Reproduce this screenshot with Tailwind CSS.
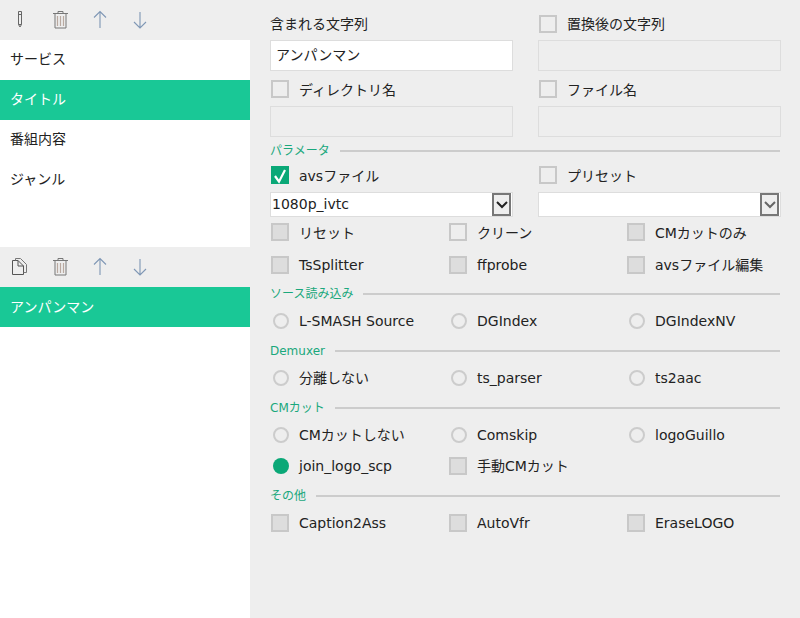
<!DOCTYPE html>
<html lang="ja"><head><meta charset="utf-8">
<script src="https://cdn.jsdelivr.net/npm/@tailwindcss/browser@4"></script>
</head>
<body class="m-0 w-[800px] h-[618px] overflow-hidden bg-[#eeeeee] font-['DejaVu_Sans','Noto_Sans_CJK_JP',sans-serif] text-[14px] text-[#222222]">
<div class="flex h-[618px]">
  <!-- left column -->
  <div class="w-[250px] flex flex-col bg-white">
    <div class="h-10 bg-[#eeeeee] flex items-center pl-[10px] gap-5 shrink-0">
      <svg class="w-5 h-5" viewBox="0 0 20 20" fill="none" stroke="#666" stroke-width="1"><path d="M8.500 1.500h3v13l-1.500 2.500-1.500-2.500zM8.500 4.500h3M8.500 14.500h3"/></svg>
      <svg class="w-5 h-5" viewBox="0 0 20 20" fill="none" stroke="#777" stroke-width="1"><path d="M3 3.500h15M8 3.500v-2h5v2M5 3.500v14.500h11V3.500"/><path d="M7.500 6v10M10.500 6v10M13.500 6v10" stroke="#b9a9a0" stroke-width="1.200"/></svg>
      <svg class="w-5 h-5" viewBox="0 0 20 20" fill="none" stroke="#7f97b5" stroke-width="1.100"><path d="M10 18V1.500M4 7.500l6-6 6 6"/></svg>
      <svg class="w-5 h-5" viewBox="0 0 20 20" fill="none" stroke="#7f97b5" stroke-width="1.100"><path d="M10 2v16M4 12l6 6 6-6"/></svg>
    </div>
    <div class="h-[207px] shrink-0">
      <div class="h-10 flex items-center pl-[10px] pb-[2px]">サービス</div>
      <div class="h-10 flex items-center pl-[10px] pb-[2px] bg-[#19c896] text-white">タイトル</div>
      <div class="h-10 flex items-center pl-[10px] pb-[2px]">番組内容</div>
      <div class="h-10 flex items-center pl-[10px] pb-[2px]">ジャンル</div>
    </div>
    <div class="h-10 bg-[#eeeeee] flex items-center pl-[10px] gap-5 shrink-0">
      <svg class="w-5 h-5" viewBox="0 0 20 20" fill="none" stroke="#555" stroke-width="1"><path d="M8 3.500H2.500V17.500H13.500V9L8 3.500V9H13.500"/><path d="M5.500 3.500V1.500H10.500L16.500 7.500V15.500H13.500" stroke="#777"/></svg>
      <svg class="w-5 h-5" viewBox="0 0 20 20" fill="none" stroke="#777" stroke-width="1"><path d="M3 3.500h15M8 3.500v-2h5v2M5 3.500v14.500h11V3.500"/><path d="M7.500 6v10M10.500 6v10M13.500 6v10" stroke="#b9a9a0" stroke-width="1.200"/></svg>
      <svg class="w-5 h-5" viewBox="0 0 20 20" fill="none" stroke="#7f97b5" stroke-width="1.100"><path d="M10 18V1.500M4 7.500l6-6 6 6"/></svg>
      <svg class="w-5 h-5" viewBox="0 0 20 20" fill="none" stroke="#7f97b5" stroke-width="1.100"><path d="M10 2v16M4 12l6 6 6-6"/></svg>
    </div>
    <div class="h-10 flex items-center pl-[10px] bg-[#19c896] text-white">アンパンマン</div>
  </div>
  <!-- right column -->
  <div class="flex-1 pl-5 pt-[15px] flex flex-col w-[530px]">
    <div class="grid grid-cols-[243px_243px] gap-x-[25px] w-[511px]">
      <div class="h-[18px] flex items-center">含まれる文字列</div>
      <label class="h-[18px] flex items-center gap-[10px] pl-[1px]"><span class="w-[18px] h-[18px] border-2 border-[#c8c8c8]"></span>置換後の文字列</label>
      <div class="mt-[7px] h-[31px] bg-white border border-[#dddddd] flex items-center pl-[5px]">アンパンマン</div>
      <div class="mt-[7px] h-[31px] bg-[#eeeeee] border border-[#dddddd]"></div>
      <label class="mt-[9px] h-[18px] flex items-center gap-[10px] pl-[1px]"><span class="w-[18px] h-[18px] border-2 border-[#c8c8c8]"></span><span class="pt-[2px]">ディレクトリ名</span></label>
      <label class="mt-[9px] h-[18px] flex items-center gap-[10px] pl-[1px]"><span class="w-[18px] h-[18px] border-2 border-[#c8c8c8]"></span><span class="pt-[2px]">ファイル名</span></label>
      <div class="mt-2 h-[31px] bg-[#eeeeee] border border-[#dddddd]"></div>
      <div class="mt-2 h-[31px] bg-[#eeeeee] border border-[#dddddd]"></div>
    </div>
    <div class="mt-[7px] h-[14px] w-[510px] flex items-center gap-[10px] text-[12px] text-[#1aa87c]"><span>パラメータ</span><span class="flex-1 h-[2px] bg-[#cccccc]"></span></div>
    <div class="mt-2 grid grid-cols-[243px_243px] gap-x-[25px] w-[511px]">
      <label class="h-[18px] flex items-center gap-[10px] pl-[1px]"><span class="w-[18px] h-[18px] bg-[#0aa877] flex items-center justify-center"><svg class="w-[18px] h-[18px]" viewBox="0 0 18 18" fill="none" stroke="#fff" stroke-width="2.200"><path d="M4 10l4 5.700 6-11.700"/></svg></span><span class="pt-[2px]">avsファイル</span></label>
      <label class="h-[18px] flex items-center gap-[10px] pl-[1px]"><span class="w-[18px] h-[18px] border-2 border-[#c8c8c8]"></span><span class="pt-[2px]">プリセット</span></label>
      <div class="mt-2 h-[25px] bg-white border border-[#dddddd] flex items-center justify-between pl-[1px] pr-[1px]">
        <span>1080p_ivtc</span>
        <span class="w-[19px] h-[23px] border-2 border-[#777777] bg-[#eeeeee] flex items-center justify-center"><svg class="w-3 h-2" viewBox="0 0 12 8" fill="none" stroke="#222" stroke-width="2"><path d="M1 1l5 5 5-5"/></svg></span>
      </div>
      <div class="mt-2 h-[25px] bg-white border border-[#dddddd] flex items-center justify-end pr-[1px]">
        <span class="w-[19px] h-[23px] border-2 border-[#777777] bg-[#eeeeee] flex items-center justify-center"><svg class="w-3 h-2" viewBox="0 0 12 8" fill="none" stroke="#666" stroke-width="2"><path d="M1 1l5 5 5-5"/></svg></span>
      </div>
    </div>
    <div class="mt-[6px] grid grid-cols-[178px_178px_178px] pl-[1px] gap-y-[15px]">
      <label class="h-[18px] flex items-center gap-[10px]"><span class="w-[18px] h-[18px] border-2 border-[#c8c8c8] bg-[#dddddd]"></span><span class="pt-[2px]">リセット</span></label>
      <label class="h-[18px] flex items-center gap-[10px]"><span class="w-[18px] h-[18px] border-2 border-[#c8c8c8]"></span><span class="pt-[2px]">クリーン</span></label>
      <label class="h-[18px] flex items-center gap-[10px]"><span class="w-[18px] h-[18px] border-2 border-[#c8c8c8] bg-[#dddddd]"></span><span class="pt-[2px]">CMカットのみ</span></label>
      <label class="h-[18px] flex items-center gap-[10px]"><span class="w-[18px] h-[18px] border-2 border-[#c8c8c8] bg-[#dddddd]"></span>TsSplitter</label>
      <label class="h-[18px] flex items-center gap-[10px]"><span class="w-[18px] h-[18px] border-2 border-[#c8c8c8] bg-[#dddddd]"></span>ffprobe</label>
      <label class="h-[18px] flex items-center gap-[10px]"><span class="w-[18px] h-[18px] border-2 border-[#c8c8c8] bg-[#dddddd]"></span>avsファイル編集</label>
    </div>
    <div class="mt-[13px] h-[14px] w-[510px] flex items-center gap-[10px] text-[12px] text-[#1aa87c]"><span>ソース読み込み</span><span class="flex-1 h-[2px] bg-[#cccccc]"></span></div>
    <div class="mt-[11px] grid grid-cols-[178px_178px_178px] pl-[3px]">
      <label class="h-[18px] flex items-center gap-[10px]"><span class="w-4 h-4 rounded-full border-2 border-[#cccccc]"></span>L-SMASH Source</label>
      <label class="h-[18px] flex items-center gap-[10px]"><span class="w-4 h-4 rounded-full border-2 border-[#cccccc]"></span>DGIndex</label>
      <label class="h-[18px] flex items-center gap-[10px]"><span class="w-4 h-4 rounded-full border-2 border-[#cccccc]"></span>DGIndexNV</label>
    </div>
    <div class="mt-[14px] h-[14px] w-[510px] flex items-center gap-[10px] text-[12px] text-[#1aa87c]"><span>Demuxer</span><span class="flex-1 h-[2px] bg-[#cccccc]"></span></div>
    <div class="mt-[11px] grid grid-cols-[178px_178px_178px] pl-[3px]">
      <label class="h-[18px] flex items-center gap-[10px]"><span class="w-4 h-4 rounded-full border-2 border-[#cccccc]"></span>分離しない</label>
      <label class="h-[18px] flex items-center gap-[10px]"><span class="w-4 h-4 rounded-full border-2 border-[#cccccc]"></span>ts_parser</label>
      <label class="h-[18px] flex items-center gap-[10px]"><span class="w-4 h-4 rounded-full border-2 border-[#cccccc]"></span>ts2aac</label>
    </div>
    <div class="mt-[14px] h-[14px] w-[510px] flex items-center gap-[10px] text-[12px] text-[#1aa87c]"><span>CMカット</span><span class="flex-1 h-[2px] bg-[#cccccc]"></span></div>
    <div class="mt-[11px] grid grid-cols-[178px_178px_178px] pl-[3px]">
      <label class="h-[18px] flex items-center gap-[10px]"><span class="w-4 h-4 rounded-full border-2 border-[#cccccc]"></span>CMカットしない</label>
      <label class="h-[18px] flex items-center gap-[10px]"><span class="w-4 h-4 rounded-full border-2 border-[#cccccc]"></span>Comskip</label>
      <label class="h-[18px] flex items-center gap-[10px]"><span class="w-4 h-4 rounded-full border-2 border-[#cccccc]"></span>logoGuillo</label>
    </div>
    <div class="mt-[13px] grid grid-cols-[178px_178px_178px] pl-[3px]">
      <label class="h-[18px] flex items-center gap-[10px]"><span class="w-4 h-4 rounded-full bg-[#0aa877]"></span>join_logo_scp</label>
      <label class="h-[18px] flex items-center gap-[10px] -ml-[2px]"><span class="w-[18px] h-[18px] border-2 border-[#c8c8c8] bg-[#dddddd]"></span>手動CMカット</label>
    </div>
    <div class="mt-[14px] h-[14px] w-[510px] flex items-center gap-[10px] text-[12px] text-[#1aa87c]"><span>その他</span><span class="flex-1 h-[2px] bg-[#cccccc]"></span></div>
    <div class="mt-[11px] grid grid-cols-[178px_178px_178px] pl-[1px]">
      <label class="h-[18px] flex items-center gap-[10px]"><span class="w-[18px] h-[18px] border-2 border-[#c8c8c8] bg-[#dddddd]"></span>Caption2Ass</label>
      <label class="h-[18px] flex items-center gap-[10px]"><span class="w-[18px] h-[18px] border-2 border-[#c8c8c8] bg-[#dddddd]"></span>AutoVfr</label>
      <label class="h-[18px] flex items-center gap-[10px]"><span class="w-[18px] h-[18px] border-2 border-[#c8c8c8] bg-[#dddddd]"></span>EraseLOGO</label>
    </div>
  </div>
</div>
</body></html>
